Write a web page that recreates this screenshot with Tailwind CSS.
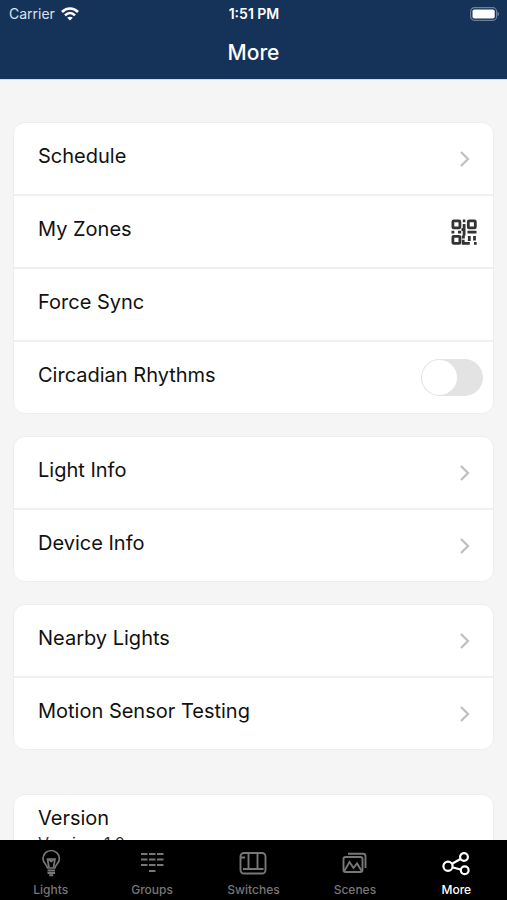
<!DOCTYPE html>
<html lang="en">
<head>
    <meta charset="UTF-8">
    <meta name="viewport" content="width=device-width, initial-scale=1.0">
    <title>More</title>
    <script src="https://cdn.jsdelivr.net/npm/@tailwindcss/browser@4"></script>
</head>
<body class="h-screen flex flex-col overflow-hidden bg-[#f5f5f5] text-[#111] font-[Inter,'Liberation_Sans',sans-serif]">

    <!-- Header -->
    <header class="shrink-0 h-20 bg-[#153359] text-white border-b border-[#d5dae2]">
        <div class="grid grid-cols-3 items-center h-7 pl-[9px] pr-2 text-sm">
            <div class="flex items-center gap-[6px] text-[#dbe2ec]">
                <span>Carrier</span>
                <svg width="18" height="14" viewBox="0 0 18 14" fill="none" stroke="#fff" stroke-width="2.6">
                    <path d="M1 5C5.500 .4 12.500 .4 17 5"/>
                    <path d="M4 8.300C7 5.300 11 5.300 14 8.300"/>
                    <path d="M9 13.600L6.200 10.800C7.800 9.400 10.200 9.400 11.800 10.800Z" fill="#fff" stroke="none"/>
                </svg>
            </div>
            <div class="text-center font-semibold">1:51 PM</div>
            <svg class="justify-self-end" width="30" height="14" viewBox="0 0 30 14">
                <rect x="1.600" y=".7" width="26" height="12.600" rx="3.800" fill="none" stroke="#6d819c" stroke-width="1.200"/>
                <rect x="3.500" y="2.500" width="22.200" height="9" rx="1.800" fill="#fff"/>
                <path d="M28.600 4.800c1.600 .8 1.600 3.600 0 4.400z" fill="#8193ab"/>
            </svg>
        </div>
        <h1 class="text-center text-[21px] leading-[50px] font-medium">More</h1>
    </header>

    <!-- Settings -->
    <main class="flex-1 min-h-0 overflow-hidden px-[13px] pt-[42px] text-xl">
        <ul class="mb-[22px] bg-white border border-[#eee] rounded-xl divide-y-2 divide-[#f0f0f0]">
            <li>
                <button class="flex w-full h-[71px] items-center justify-between pl-6 pr-[23px]">
                    <span class="pb-[6px]">Schedule</span>
                    <svg width="11" height="16" viewBox="0 0 11 16" fill="none" stroke="#c0c0c0" stroke-width="2.300"><path d="M2 1l7 7-7 7"/></svg>
                </button>
            </li>
            <li>
                <button class="flex w-full h-[71px] items-center justify-between pl-6 pr-4">
                    <span class="pb-[6px]">My Zones</span>
                    <svg width="26" height="26" viewBox="0 0 26 26" fill="none" stroke="#333" stroke-width="2.800">
                        <rect x="1.900" y="1.900" width="7" height="7" rx=".8"/>
                        <rect x="17.300" y="1.900" width="7" height="7" rx=".8"/>
                        <rect x="1.900" y="17.300" width="7" height="7" rx=".8"/>
                        <path d="M11.800 1.900h2.600M13.100 5v4M.5 13.200h2.800M7 13.200h3.200M10.500 10.500h4M13.100 10v6.500M16.500 13.200h9M10.800 18h3M12.200 20.800v3.600h6.600M18.300 17v5M23.500 17v4.500M23 24.300h2.700"/>
                    </svg>
                </button>
            </li>
            <li>
                <button class="flex w-full h-[71px] items-center justify-between pl-6">
                    <span class="pb-[6px]">Force Sync</span>
                </button>
            </li>
            <li class="flex h-[71px] items-center justify-between pl-6 pr-[10px]">
                <label for="circadian" class="pb-[6px]">Circadian Rhythms</label>
                <input id="circadian" type="checkbox" role="switch" class="appearance-none w-[62px] h-[37px] p-px rounded-full bg-[#e3e3e3] before:block before:size-[35px] before:rounded-full before:bg-white checked:bg-green-500 checked:before:translate-x-[25px]">
            </li>
        </ul>

        <ul class="mb-[22px] bg-white border border-[#eee] rounded-xl divide-y-2 divide-[#f0f0f0]">
            <li>
                <button class="flex w-full h-[71px] items-center justify-between pl-6 pr-[23px]">
                    <span class="pb-[6px]">Light Info</span>
                    <svg width="11" height="16" viewBox="0 0 11 16" fill="none" stroke="#c0c0c0" stroke-width="2.300"><path d="M2 1l7 7-7 7"/></svg>
                </button>
            </li>
            <li>
                <button class="flex w-full h-[71px] items-center justify-between pl-6 pr-[23px]">
                    <span class="pb-[6px]">Device Info</span>
                    <svg width="11" height="16" viewBox="0 0 11 16" fill="none" stroke="#c0c0c0" stroke-width="2.300"><path d="M2 1l7 7-7 7"/></svg>
                </button>
            </li>
        </ul>

        <ul class="mb-11 bg-white border border-[#eee] rounded-xl divide-y-2 divide-[#f0f0f0]">
            <li>
                <button class="flex w-full h-[71px] items-center justify-between pl-6 pr-[23px]">
                    <span class="pb-[6px]">Nearby Lights</span>
                    <svg width="11" height="16" viewBox="0 0 11 16" fill="none" stroke="#c0c0c0" stroke-width="2.300"><path d="M2 1l7 7-7 7"/></svg>
                </button>
            </li>
            <li>
                <button class="flex w-full h-[71px] items-center justify-between pl-6 pr-[23px]">
                    <span class="pb-[6px]">Motion Sensor Testing</span>
                    <svg width="11" height="16" viewBox="0 0 11 16" fill="none" stroke="#c0c0c0" stroke-width="2.300"><path d="M2 1l7 7-7 7"/></svg>
                </button>
            </li>
        </ul>

        <section class="bg-white border border-[#eee] rounded-xl px-6 pt-[9px] pb-4">
            <h2 class="leading-7">Version</h2>
            <p class="mt-px text-base leading-5 text-[#333]">Version: 1.0</p>
        </section>
    </main>

    <!-- Tab bar -->
    <nav class="shrink-0 grid grid-cols-5 h-[60px] bg-black text-[#777] text-xs leading-4 font-medium">
        <a href="#lights" class="flex flex-col items-center gap-[5px] pt-[9px]">
            <svg width="28" height="28" viewBox="0 0 28 28" fill="none" stroke="currentColor" stroke-width="1.700">
                <path d="M10.500 19C10 15.500 6 14.500 6 9.700a8.200 8.200 0 0 1 16.400 0c0 4.800-4 5.800-4.500 9.300z"/>
                <path d="M12 18.500l-1.500-8.500h7.500l-1.500 8.500M12 10.500l2.200 2 2.200-2"/>
                <path d="M10.500 21.500h7.500M10.500 24h7.500M12.200 26.300h4" stroke-width="2"/>
            </svg>
            <span>Lights</span>
        </a>
        <a href="#groups" class="flex flex-col items-center gap-[5px] pt-[9px]">
            <svg width="28" height="28" viewBox="0 0 28 28" fill="none" stroke="currentColor" stroke-width="2.200">
                <path d="M3 5h6.500M11 5h6.500M19 5h6.500M3 10.500h6.500M11 10.500h6.500M19 10.500h6.500M3 16h6.500M11 16h6.500M19 16h6.500M11 22h6.500"/>
            </svg>
            <span>Groups</span>
        </a>
        <a href="#switches" class="flex flex-col items-center gap-[5px] pt-[9px]">
            <svg width="28" height="28" viewBox="0 0 28 28" fill="none" stroke="currentColor" stroke-width="1.900">
                <rect x="1.500" y="4" width="25" height="20.500" rx="3.500"/>
                <path d="M9.500 4v16M18.500 4v16M4 20h20.500M2 8.500h4"/>
            </svg>
            <span>Switches</span>
        </a>
        <a href="#scenes" class="flex flex-col items-center gap-[5px] pt-[9px]">
            <svg width="28" height="28" viewBox="0 0 28 28" fill="none" stroke="currentColor" stroke-width="1.900">
                <path d="M7 4.800h15q2.500 0 2.500 2.500v11.700"/>
                <rect x="2.500" y="8" width="19" height="15" rx="2"/>
                <path d="M3 22.500l5.500-9.500 4 6 3.500-4.500L21 22.500"/>
            </svg>
            <span>Scenes</span>
        </a>
        <a href="#more" aria-current="page" class="flex flex-col items-center gap-[5px] pt-[9px] text-white">
            <svg width="28" height="28" viewBox="0 0 28 28" fill="none" stroke="currentColor" stroke-width="2.200">
                <circle cx="6" cy="17.200" r="4.600"/>
                <circle cx="22" cy="8" r="3.900"/>
                <circle cx="22.700" cy="21.300" r="3.900"/>
                <path d="M10.500 14.500l8-4.500M11 18.500l7.500 2"/>
            </svg>
            <span>More</span>
        </a>
    </nav>
</body>
</html>
